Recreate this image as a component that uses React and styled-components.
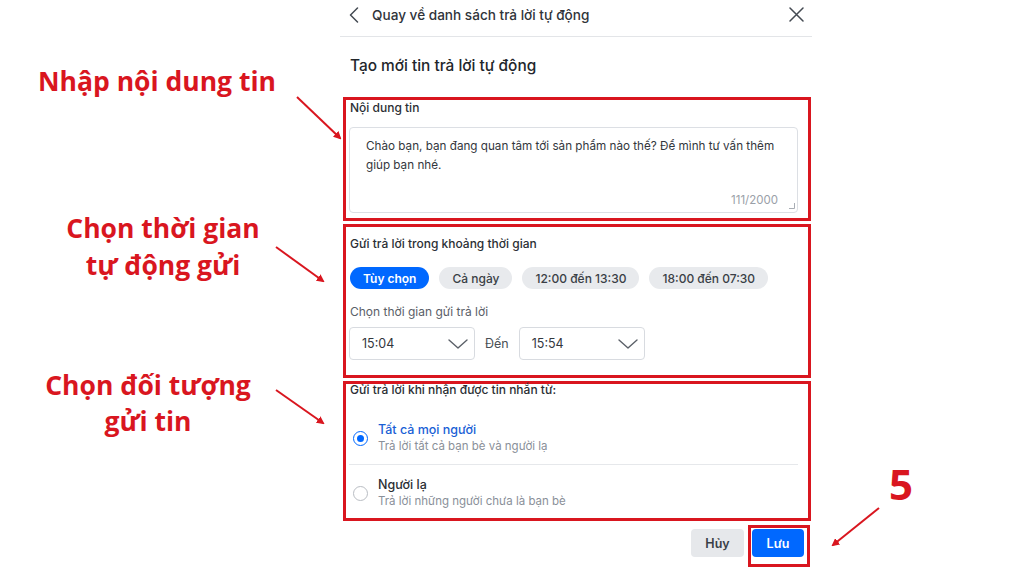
import React from 'react';
import styled, { createGlobalStyle } from 'styled-components';

const RED = '#d9161f';
const BLUE = '#0068ff';

const Global = createGlobalStyle`
  html, body { margin: 0; padding: 0; background: #ffffff; }
  body { font-family: Inter, "Noto Sans", sans-serif; -webkit-font-smoothing: antialiased; }
  * { box-sizing: border-box; }
`;

const Page = styled.div`
  position: relative;
  width: 1024px;
  height: 576px;
  overflow: hidden;
  display: grid;
  grid-template-columns: 340px 472px 1fr;
  background: #fff;
`;

const Panel = styled.main`
  grid-column: 2;
  display: flex;
  flex-direction: column;
  color: #22262b;
`;

const Header = styled.header`
  height: 37px;
  border-bottom: 1px solid #e3e5e8;
  display: flex;
  align-items: center;
  gap: 13px;
  padding: 0 8px 7px 9px;
  font-size: 13.6px;
  font-weight: 500;
  color: #30343a;
`;

const HeaderText = styled.span`
  flex: 1;
`;

const IconBtn = styled.span`
  display: flex;
  align-items: center;
  justify-content: center;
  color: #444a52;
`;

const Title = styled.h1`
  margin: 19px 0 21px;
  padding: 0 10px;
  font-size: 15.4px;
  line-height: 20px;
  font-weight: 500;
  color: #22262b;
`;

const Sections = styled.div`
  display: flex;
  flex-direction: column;
  gap: 3px;
`;

const Section = styled.section`
  margin: 0 1px 0 3px;
  border: 3px solid ${RED};
  display: flex;
  flex-direction: column;
  padding: ${p => p.$pad};
`;

const Label = styled.div`
  font-size: 12px;
  line-height: ${p => p.$lh || '15px'};
  font-weight: 500;
  color: #2b2f35;
  padding-left: 1px;
`;

const SubLabel = styled.div`
  font-size: 12px;
  line-height: 15px;
  color: #5a6068;
  padding-left: 1px;
  margin-top: 15px;
`;

const TextBox = styled.div`
  margin-top: 12px;
  height: 86px;
  border: 1px solid #dcdfe4;
  border-radius: 4px;
  padding: 9px 2px 3px 16px;
  display: flex;
  flex-direction: column;
`;

const Message = styled.div`
  font-size: 11.7px;
  line-height: 19px;
  color: #33373d;
  padding-right: 4px;
  white-space: pre-line;
`;

const CounterRow = styled.div`
  margin-top: auto;
  display: flex;
  justify-content: flex-end;
  align-items: flex-end;
  gap: 11px;
`;

const Counter = styled.span`
  font-size: 11.5px;
  line-height: 14px;
  color: #9aa0a8;
  margin-bottom: 2px;
`;

const Chips = styled.div`
  display: flex;
  gap: 10px;
  margin-top: 16px;
  padding-left: 1px;
`;

const Chip = styled.button`
  height: 22px;
  border: none;
  border-radius: 11px;
  padding: 0 13px;
  font-family: inherit;
  font-size: 12px;
  font-weight: ${p => (p.$active ? 600 : 500)};
  background: ${p => (p.$active ? BLUE : '#e8eaed')};
  color: ${p => (p.$active ? '#fff' : '#3a3f46')};
`;

const TimeRow = styled.div`
  display: flex;
  align-items: center;
  gap: 10px;
  margin-top: 8px;
`;

const SelectBox = styled.div`
  width: 126px;
  height: 33px;
  border: 1px solid #d8dbe0;
  border-radius: 4px;
  display: flex;
  align-items: center;
  justify-content: space-between;
  padding: 0 5px 0 12px;
  font-size: 12.5px;
  color: #33373d;
`;

const TimeSep = styled.span`
  font-size: 12.5px;
  color: #4a4f56;
`;

const Options = styled.div`
  display: flex;
  flex-direction: column;
  margin-top: 14px;
`;

const Option = styled.label`
  display: flex;
  align-items: center;
  gap: 10px;
  padding: 12px 0 10px 4px;
  border-bottom: 1px solid #e6e8eb;
  &:last-child {
    border-bottom: none;
    padding-bottom: 9px;
  }
`;

const Radio = styled.span`
  width: 15px;
  height: 15px;
  border-radius: 50%;
  border: 1.5px solid ${p => (p.$checked ? BLUE : '#b9bdc3')};
  display: flex;
  align-items: center;
  justify-content: center;
  flex: none;
  &::after {
    content: '';
    width: 7px;
    height: 7px;
    border-radius: 50%;
    background: ${p => (p.$checked ? BLUE : 'transparent')};
  }
`;

const OptionText = styled.div`
  display: flex;
  flex-direction: column;
  gap: 2px;
`;

const OptionTitle = styled.span`
  font-size: 12.5px;
  line-height: 15px;
  font-weight: 500;
  color: ${p => (p.$checked ? '#1a5fd6' : '#2b2f35')};
`;

const OptionSub = styled.span`
  font-size: 11.5px;
  line-height: 15px;
  color: #8a9099;
`;

const Footer = styled.div`
  display: flex;
  justify-content: flex-end;
  align-items: flex-start;
  gap: 4px;
  margin-top: 4px;
  padding-right: 2px;
`;

const Button = styled.button`
  height: 28px;
  border: none;
  border-radius: 4px;
  padding: 0;
  width: ${p => p.$w}px;
  margin-top: ${p => p.$mt || 0}px;
  font-family: inherit;
  font-size: 12.5px;
  font-weight: 600;
  background: ${p => (p.$primary ? BLUE : '#e6e8eb')};
  color: ${p => (p.$primary ? '#fff' : '#3a3f46')};
`;

const Highlight = styled.div`
  border: 3px solid ${RED};
  padding: 1px 3px 7px 1px;
  display: flex;
`;

const Callout = styled.div`
  position: absolute;
  left: ${p => p.$x}px;
  top: ${p => p.$y}px;
  width: 300px;
  text-align: center;
  font-family: "Open Sans", "Noto Sans", sans-serif;
  font-weight: 700;
  font-size: ${p => p.$size || 26.5}px;
  line-height: ${p => p.$lh || 37}px;
  color: ${RED};
  white-space: pre-line;
`;

const StepNumber = styled(Callout)`
  width: 60px;
`;

const ArrowLayer = styled.svg`
  position: absolute;
  left: 0;
  top: 0;
  pointer-events: none;
`;

const ChevronDown = () => (
  <svg width="22" height="14" viewBox="0 0 22 14">
    <path d="M2 3 L11 11 L20 3" fill="none" stroke="#5b6068" strokeWidth="1.4" strokeLinecap="round" strokeLinejoin="round" />
  </svg>
);

const arrows = [
  [297, 97, 340, 138],
  [276, 247, 323, 281],
  [276, 390, 323, 423],
  [879, 508, 833, 545],
];

export default function App() {
  return (
    <>
      <Global />
      <Page>
        <Panel>
          <Header>
            <IconBtn>
              <svg width="10" height="16" viewBox="0 0 10 16">
                <path d="M8.5 1 L1.5 8 L8.5 15" fill="none" stroke="#444a52" strokeWidth="1.5" strokeLinecap="round" strokeLinejoin="round" />
              </svg>
            </IconBtn>
            <HeaderText>Quay về danh sách trả lời tự động</HeaderText>
            <IconBtn>
              <svg width="15" height="15" viewBox="0 0 15 15">
                <path d="M1 1 L14 14 M14 1 L1 14" fill="none" stroke="#444a52" strokeWidth="1.5" strokeLinecap="round" />
              </svg>
            </IconBtn>
          </Header>

          <Title>Tạo mới tin trả lời tự động</Title>

          <Sections>
            <Section $pad="0 10px 5px 3px">
              <Label>Nội dung tin</Label>
              <TextBox>
                <Message>{'Chào bạn, bạn đang quan tâm tới sản phẩm nào thế? Để mình tư vấn thêm\ngiúp bạn nhé.'}</Message>
                <CounterRow>
                  <Counter>111/2000</Counter>
                  <svg width="6" height="6" viewBox="0 0 6 6">
                    <path d="M5.5 0 V5.5 H0" fill="none" stroke="#a8adb4" strokeWidth="1" />
                  </svg>
                </CounterRow>
              </TextBox>
            </Section>

            <Section $pad="9px 10px 15px 3px">
              <Label>Gửi trả lời trong khoảng thời gian</Label>
              <Chips>
                <Chip $active>Tùy chọn</Chip>
                <Chip>Cả ngày</Chip>
                <Chip>12:00 đến 13:30</Chip>
                <Chip>18:00 đến 07:30</Chip>
              </Chips>
              <SubLabel>Chọn thời gian gửi trả lời</SubLabel>
              <TimeRow>
                <SelectBox>
                  <span>15:04</span>
                  <ChevronDown />
                </SelectBox>
                <TimeSep>Đến</TimeSep>
                <SelectBox>
                  <span>15:54</span>
                  <ChevronDown />
                </SelectBox>
              </TimeRow>
            </Section>

            <Section $pad="0 10px 0 3px">
              <Label $lh="12px">Gửi trả lời khi nhận được tin nhắn từ:</Label>
              <Options>
                <Option>
                  <Radio $checked />
                  <OptionText>
                    <OptionTitle $checked>Tất cả mọi người</OptionTitle>
                    <OptionSub>Trả lời tất cả bạn bè và người lạ</OptionSub>
                  </OptionText>
                </Option>
                <Option>
                  <Radio />
                  <OptionText>
                    <OptionTitle>Người lạ</OptionTitle>
                    <OptionSub>Trả lời những người chưa là bạn bè</OptionSub>
                  </OptionText>
                </Option>
              </Options>
            </Section>
          </Sections>

          <Footer>
            <Button $w={53} $mt={4}>Hủy</Button>
            <Highlight>
              <Button $primary $w={52}>Lưu</Button>
            </Highlight>
          </Footer>
        </Panel>

        <Callout $x={7} $y={63}>Nhập nội dung tin</Callout>
        <Callout $x={13} $y={210}>{'Chọn thời gian\ntự động gửi'}</Callout>
        <Callout $x={-2} $y={367} $lh={36}>{'Chọn đối tượng\ngửi tin'}</Callout>
        <StepNumber $x={871} $y={458} $size={42} $lh={52}>5</StepNumber>

        <ArrowLayer width="1024" height="576" viewBox="0 0 1024 576">
          <defs>
            <marker id="head" markerWidth="8" markerHeight="8" refX="6" refY="4" orient="auto" markerUnits="userSpaceOnUse">
              <path d="M0 0 L8 4 L0 8 Z" fill={RED} />
            </marker>
          </defs>
          {arrows.map(([x1, y1, x2, y2], i) => (
            <line key={i} x1={x1} y1={y1} x2={x2} y2={y2} stroke={RED} strokeWidth="2" markerEnd="url(#head)" />
          ))}
        </ArrowLayer>
      </Page>
    </>
  );
}
